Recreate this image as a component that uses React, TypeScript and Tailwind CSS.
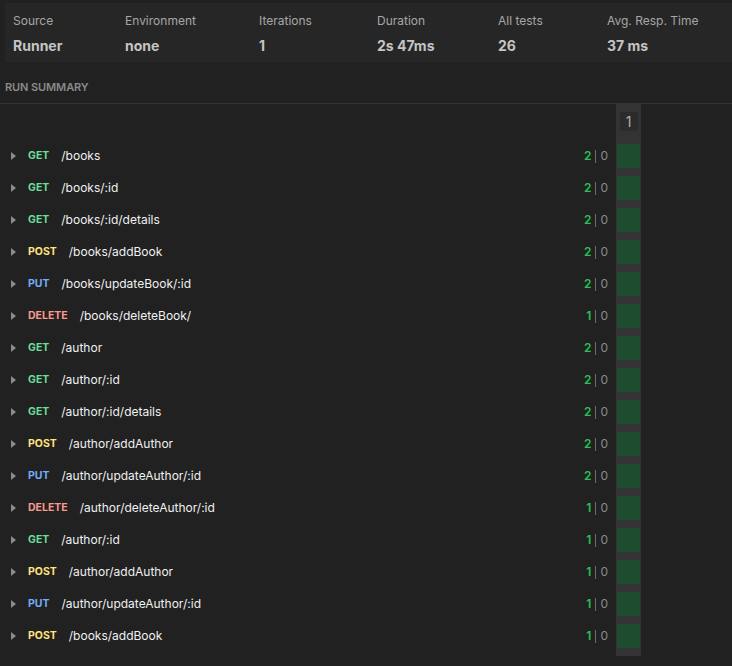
import React from "react";

type Row = { m: "GET" | "POST" | "PUT" | "DELETE"; p: string; n: number };

const rows: Row[] = [
  { m: "GET", p: "/books", n: 2 },
  { m: "GET", p: "/books/:id", n: 2 },
  { m: "GET", p: "/books/:id/details", n: 2 },
  { m: "POST", p: "/books/addBook", n: 2 },
  { m: "PUT", p: "/books/updateBook/:id", n: 2 },
  { m: "DELETE", p: "/books/deleteBook/", n: 1 },
  { m: "GET", p: "/author", n: 2 },
  { m: "GET", p: "/author/:id", n: 2 },
  { m: "GET", p: "/author/:id/details", n: 2 },
  { m: "POST", p: "/author/addAuthor", n: 2 },
  { m: "PUT", p: "/author/updateAuthor/:id", n: 2 },
  { m: "DELETE", p: "/author/deleteAuthor/:id", n: 1 },
  { m: "GET", p: "/author/:id", n: 1 },
  { m: "POST", p: "/author/addAuthor", n: 1 },
  { m: "PUT", p: "/author/updateAuthor/:id", n: 1 },
  { m: "POST", p: "/books/addBook", n: 1 },
];

const methodClass: Record<Row["m"], string> = {
  GET: "text-[#6bdd9a]",
  POST: "text-[#ffe47e]",
  PUT: "text-[#74aef6]",
  DELETE: "text-[#f79a8e]",
};

const stats = [
  { l: "Source", v: "Runner", w: "w-[112px]" },
  { l: "Environment", v: "none", w: "w-[134px]" },
  { l: "Iterations", v: "1", w: "w-[118px]" },
  { l: "Duration", v: "2s 47ms", w: "w-[121px]" },
  { l: "All tests", v: "26", w: "w-[109px]" },
  { l: "Avg. Resp. Time", v: "37 ms", w: "w-[120px]" },
];

export default function App() {
  return (
    <div
      className="w-[732px] h-[666px] bg-[#212121] overflow-hidden"
      style={{ fontFamily: "Inter, 'Noto Sans', sans-serif" }}
    >
      <div className="pt-[3px] pl-[5px]">
        <div className="bg-[#262626] h-[59px] flex pl-[8px] pt-[10px]">
          {stats.map((s) => (
            <div key={s.l} className={`${s.w} flex flex-col shrink-0`}>
              <div className="text-[12px] leading-[16px] text-[#a6a6a6]">{s.l}</div>
              <div className="text-[14px] leading-[17px] font-bold text-[#c4c4c4] mt-[8px]">
                {s.v}
              </div>
            </div>
          ))}
        </div>
      </div>
      <div className="pl-[5px] mt-[18px] h-[14px] flex items-center text-[11px] font-semibold text-[#8a8a8a] tracking-[-0.1px]">
        RUN SUMMARY
      </div>
      <div className="mt-[9px] border-b border-[#333333]" />
      <div className="flex">
        <div className="w-[616px] pt-[36px]">
          {rows.map((r, i) => (
            <div key={i} className="h-[32px] flex items-center">
              <svg width="6" height="8" viewBox="0 0 6 8" className="ml-[11px] mr-[11px]">
                <path d="M0 0 L5 4 L0 8 Z" fill="#8c8c8c" />
              </svg>
              <span className={`text-[10.5px] font-bold ${methodClass[r.m]}`}>{r.m}</span>
              <span className="ml-[12px] text-[12px] text-[#f0f0f0]">{r.p}</span>
              <div className="ml-auto mr-[8px] flex items-center text-[12px]">
                <span className="text-[#27c257] font-semibold">{r.n}</span>
                <span className="mx-[4px] w-px h-[13px] bg-[#7a6a55]" />
                <span className="text-[#8c8c8c]">0</span>
              </div>
            </div>
          ))}
        </div>
        <div className="w-[25px] bg-[#333333] pb-[4px] self-start">
          <div className="h-[36px] flex items-start justify-center pt-[8px]">
            <div className="w-[18px] h-[19px] rounded-[3px] bg-[#2b2b2b] text-[#b0b0b0] text-[14px] flex items-center justify-center">
              1
            </div>
          </div>
          {rows.map((_, i) => (
            <div key={i} className="h-[32px] px-[1px] py-[4px]">
              <div className="h-full bg-[#1d4d2e]" />
            </div>
          ))}
        </div>
      </div>
    </div>
  );
}
